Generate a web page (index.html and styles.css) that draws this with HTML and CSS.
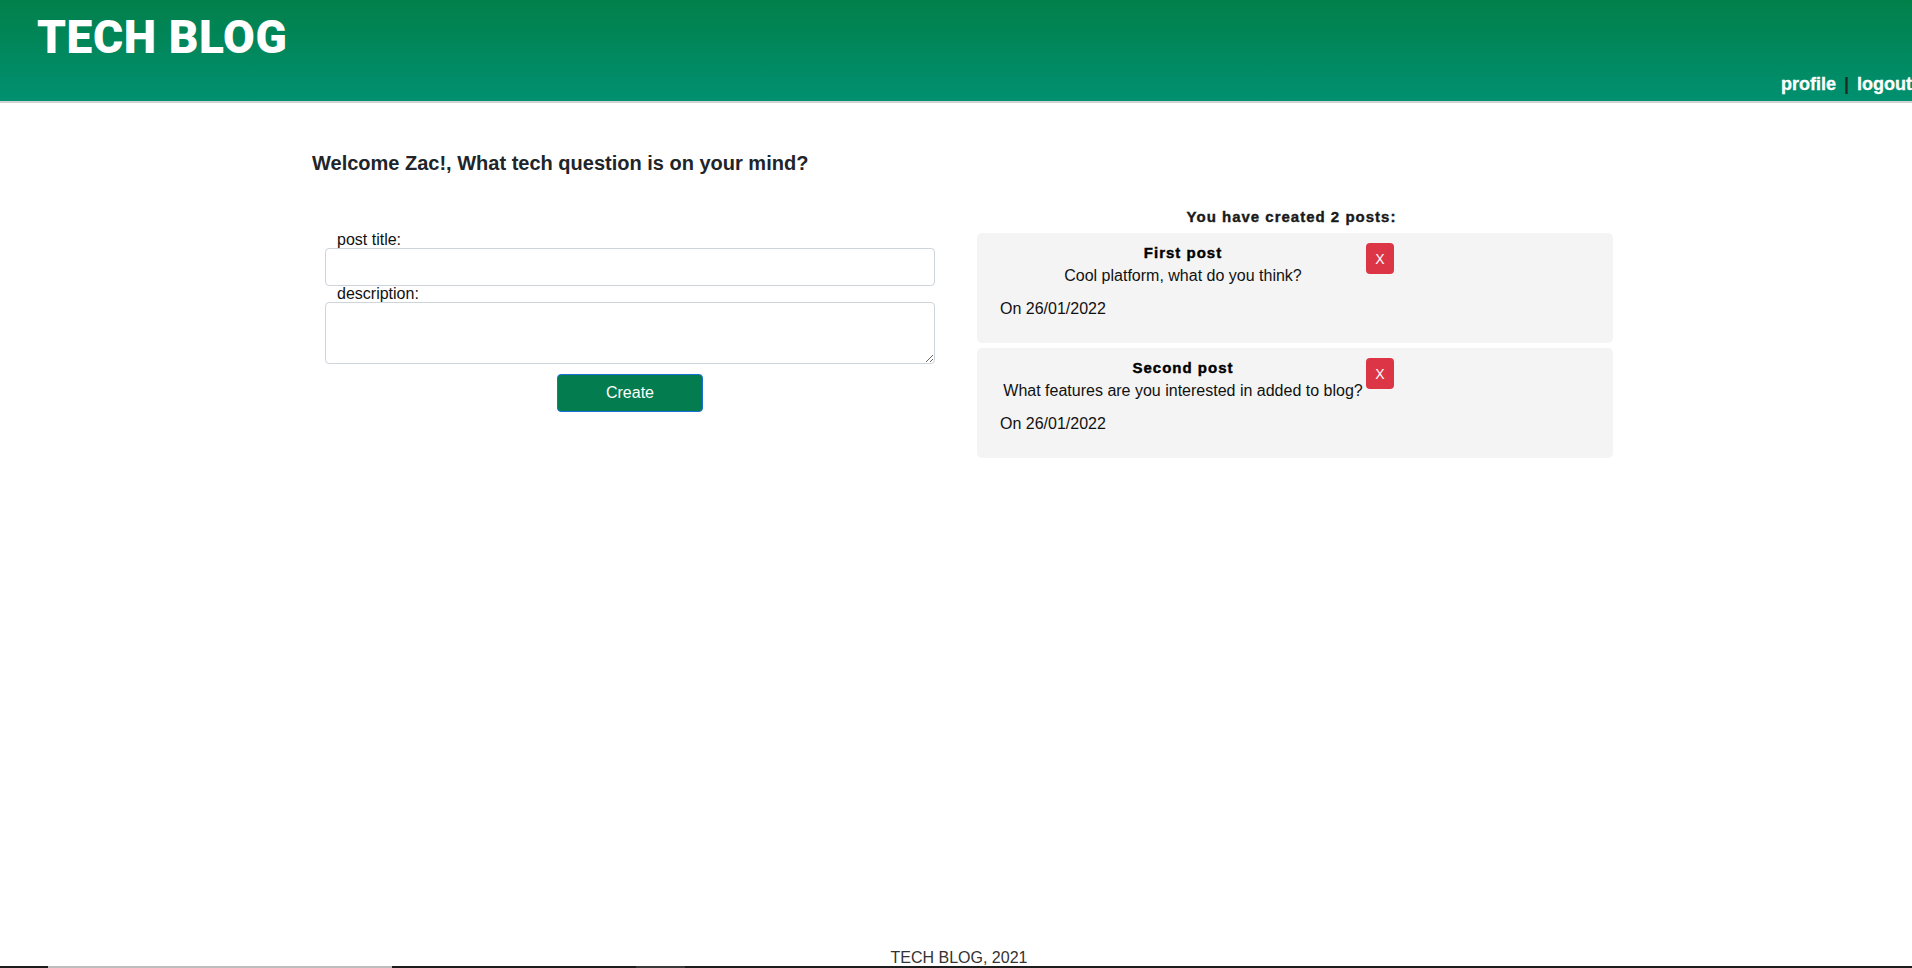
FILE: index.html
```html
<!DOCTYPE html>
<html lang="en">
<head>
<meta charset="utf-8">
<title>Tech Blog - Dashboard</title>
<link rel="stylesheet" href="styles.css">
</head>
<body>
<div class="page">
  <header class="site-header">
    <h1 class="brand">TECH BLOG</h1>
    <nav class="nav">
      <a class="nav-link" href="#">profile</a><span class="sep">|</span><a class="nav-link" href="#">logout</a>
    </nav>
  </header>

  <main class="main">
    <h2 class="welcome">Welcome Zac!, What tech question is on your mind?</h2>
    <div class="columns">
      <form class="post-form">
        <label class="field-label" for="title">post title:</label>
        <input class="field" id="title" type="text">
        <label class="field-label" for="desc">description:</label>
        <textarea class="field field-area" id="desc" rows="2"></textarea>
        <button class="create-btn" type="button">Create</button>
      </form>

      <section class="posts">
        <h3 class="posts-title">You have created 2 posts:</h3>
        <article class="card">
          <div class="card-row">
            <div class="card-text">
              <h4 class="card-title">First post</h4>
              <p class="card-body">Cool platform, what do you think?</p>
            </div>
            <button class="del-btn" type="button">X</button>
          </div>
          <p class="card-date">On 26/01/2022</p>
        </article>
        <article class="card">
          <div class="card-row">
            <div class="card-text">
              <h4 class="card-title">Second post</h4>
              <p class="card-body">What features are you interested in added to blog?</p>
            </div>
            <button class="del-btn" type="button">X</button>
          </div>
          <p class="card-date">On 26/01/2022</p>
        </article>
      </section>
    </div>
  </main>

  <footer class="site-footer">TECH BLOG, 2021</footer>
  <div class="bottom-strip"></div>
</div>
</body>
</html>
```

FILE: styles.css
```css
* { box-sizing: border-box; }

html, body {
  margin: 0;
  padding: 0;
}

body {
  font-family: "Liberation Sans", Arial, sans-serif;
  font-size: 16px;
  color: #212529;
  background: #ffffff;
  overflow: hidden;
}

.page {
  min-height: 968px;
  display: flex;
  flex-direction: column;
}

/* Header */
.site-header {
  height: 103px;
  padding: 10px 0 6px 37px;
  display: flex;
  justify-content: space-between;
  background: linear-gradient(to bottom, #02804a 0%, #009070 100%);
  border-bottom: 2px solid #d2d2d2;
}

.brand {
  margin: 0;
  font-family: Roboto, "Liberation Sans", Arial, sans-serif;
  font-weight: 900;
  font-size: 46px;
  line-height: 55px;
  color: #ffffff;
  letter-spacing: 0.6px;
}

.nav {
  align-self: flex-end;
  display: flex;
  align-items: baseline;
  font-weight: 700;
  font-size: 18px;
  line-height: 21px;
}

.nav-link {
  color: #ffffff;
  text-decoration: none;
  -webkit-text-stroke: 0.3px #ffffff;
}

.sep {
  color: #1e2a26;
  margin: 0 8px;
}

/* Main */
.main {
  flex: 1;
  margin-left: 312px;
  width: 1301px;
}

.welcome {
  margin: 48px 0 0;
  font-size: 20px;
  line-height: 24px;
  font-weight: 700;
  color: #212529;
}

.columns {
  margin-top: 32px;
  display: grid;
  grid-template-columns: 623px 636px;
  column-gap: 42px;
  align-items: start;
}

/* Form */
.post-form {
  padding: 25px 0 0 13px;
  display: flex;
  flex-direction: column;
}

.field-label {
  display: block;
  padding-left: 12px;
  font-size: 16px;
  line-height: 16px;
  color: #111;
}

.field {
  display: block;
  width: 100%;
  height: 38px;
  border: 1px solid #ced4da;
  border-radius: 4px;
  background: #fff;
  font-family: inherit;
  font-size: 16px;
  padding: 6px 12px;
}

.field-area {
  height: 62px;
  resize: vertical;
}

.create-btn {
  align-self: center;
  margin-top: 10px;
  width: 146px;
  height: 38px;
  background: #037d4f;
  color: #ffffff;
  border: 1px solid #1d6fd8;
  border-radius: 4px;
  font-family: inherit;
  font-size: 16px;
}

/* Posts */
.posts-title {
  margin: 0 0 6px;
  padding-right: 7px;
  text-align: center;
  font-size: 15px;
  line-height: 20px;
  font-weight: 700;
  letter-spacing: 1px;
  color: #1a1a1a;
  -webkit-text-stroke: 0.4px #1a1a1a;
}

.card {
  background: #f4f4f4;
  border-radius: 5px;
  padding: 10px 23px 22px;
  margin-bottom: 5px;
}

.card-row {
  display: flex;
  align-items: flex-start;
}

.card-text {
  width: 366px;
  text-align: center;
}

.card-title {
  margin: 0;
  font-size: 15px;
  line-height: 19px;
  font-weight: 700;
  letter-spacing: 1px;
  color: #000;
  -webkit-text-stroke: 0.4px #000;
}

.card-body {
  margin: 2px 0 0;
  font-size: 16px;
  line-height: 24px;
  color: #111;
}

.del-btn {
  width: 28px;
  height: 31px;
  padding: 0;
  background: #dc3545;
  color: #ffffff;
  border: none;
  border-radius: 4px;
  font-family: inherit;
  font-size: 14px;
}

.card-date {
  margin: 9px 0 0;
  font-size: 16px;
  line-height: 24px;
  color: #111;
}

/* Footer */
.site-footer {
  text-align: center;
  padding-left: 6px;
  font-size: 16px;
  line-height: 16px;
  height: 16px;
  color: #333;
}

.bottom-strip {
  height: 2px;
  background: linear-gradient(to right,
    #1d1d1d 0 48px,
    #bdbdbd 48px 392px,
    #1d1d1d 392px 636px,
    #3a3a3a 636px 685px,
    #1d1d1d 685px 100%);
}
```
